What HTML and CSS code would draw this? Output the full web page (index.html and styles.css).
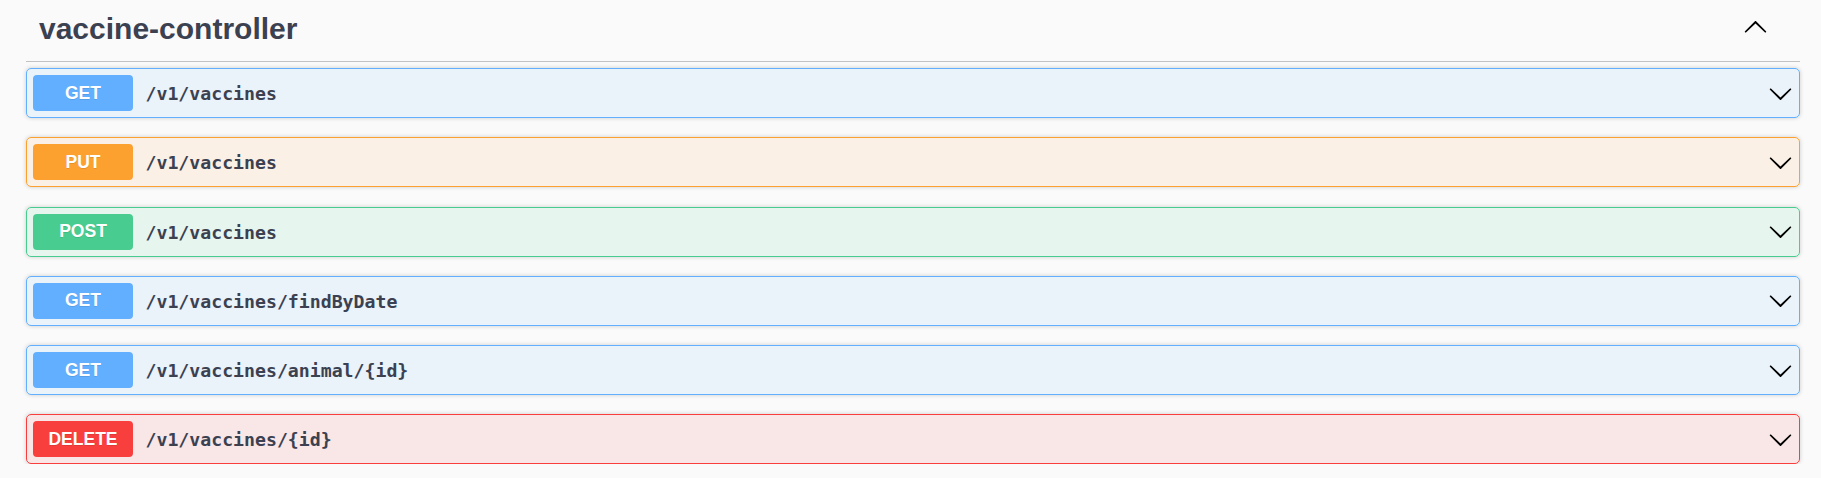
FILE: index.html
```html
<!DOCTYPE html>
<html>
<head>
<meta charset="utf-8">
<link rel="stylesheet" href="styles.css">
</head>
<body>
<div class="wrapper">
  <div class="tag">
    <h3 class="tag-title">vaccine-controller</h3>
    <button class="expand">
      <svg class="arrow up" viewBox="0 0 20 20" width="25" height="25"><path d="M17.418 6.109c.272-.268.709-.268.979 0s.271.701 0 .969l-7.908 7.83c-.27.268-.707.268-.979 0l-7.908-7.83c-.27-.268-.27-.701 0-.969.271-.268.709-.268.979 0L10 13.25l7.418-7.141z"/></svg>
    </button>
  </div>
  <div class="ops">
    <div class="op get">
      <span class="method">GET</span><span class="path">/v1/vaccines</span>
      <svg class="arrow" viewBox="0 0 20 20" width="25" height="25"><path d="M17.418 6.109c.272-.268.709-.268.979 0s.271.701 0 .969l-7.908 7.830c-.27.268-.707.268-.979 0l-7.908-7.83c-.27-.268-.27-.701 0-.969.271-.268.709-.268.979 0L10 13.25l7.418-7.141z"/></svg>
    </div>
    <div class="op put">
      <span class="method">PUT</span><span class="path">/v1/vaccines</span>
      <svg class="arrow" viewBox="0 0 20 20" width="25" height="25"><path d="M17.418 6.109c.272-.268.709-.268.979 0s.271.701 0 .969l-7.908 7.83c-.27.268-.707.268-.979 0l-7.908-7.83c-.27-.268-.27-.701 0-.969.271-.268.709-.268.979 0L10 13.25l7.418-7.141z"/></svg>
    </div>
    <div class="op post">
      <span class="method">POST</span><span class="path">/v1/vaccines</span>
      <svg class="arrow" viewBox="0 0 20 20" width="25" height="25"><path d="M17.418 6.109c.272-.268.709-.268.979 0s.271.701 0 .969l-7.908 7.83c-.27.268-.707.268-.979 0l-7.908-7.83c-.27-.268-.27-.701 0-.969.271-.268.709-.268.979 0L10 13.25l7.418-7.141z"/></svg>
    </div>
    <div class="op get">
      <span class="method">GET</span><span class="path">/v1/vaccines/findByDate</span>
      <svg class="arrow" viewBox="0 0 20 20" width="25" height="25"><path d="M17.418 6.109c.272-.268.709-.268.979 0s.271.701 0 .969l-7.908 7.83c-.27.268-.707.268-.979 0l-7.908-7.83c-.27-.268-.27-.701 0-.969.271-.268.709-.268.979 0L10 13.25l7.418-7.141z"/></svg>
    </div>
    <div class="op get">
      <span class="method">GET</span><span class="path">/v1/vaccines/animal/{id}</span>
      <svg class="arrow" viewBox="0 0 20 20" width="25" height="25"><path d="M17.418 6.109c.272-.268.709-.268.979 0s.271.701 0 .969l-7.908 7.83c-.27.268-.707.268-.979 0l-7.908-7.83c-.27-.268-.27-.701 0-.969.271-.268.709-.268.979 0L10 13.25l7.418-7.141z"/></svg>
    </div>
    <div class="op delete">
      <span class="method">DELETE</span><span class="path">/v1/vaccines/{id}</span>
      <svg class="arrow" viewBox="0 0 20 20" width="25" height="25"><path d="M17.418 6.109c.272-.268.709-.268.979 0s.271.701 0 .969l-7.908 7.83c-.27.268-.707.268-.979 0l-7.908-7.83c-.27-.268-.27-.701 0-.969.271-.268.709-.268.979 0L10 13.25l7.418-7.141z"/></svg>
    </div>
  </div>
</div>
</body>
</html>
```

FILE: styles.css
```css
html, body {
  margin: 0;
  padding: 0;
  background: #fafafa;
}
.wrapper {
  padding: 0 21px 0 26px;
  font-family: "Liberation Sans", Arial, sans-serif;
}
.tag {
  display: flex;
  align-items: flex-start;
  height: 62px;
  box-sizing: border-box;
  padding: 12px 0 0 13px;
  border-bottom: 1px solid rgba(59, 65, 81, 0.3);
  margin-bottom: 6px;
}
.tag-title {
  flex: 1;
  margin: 0;
  font-size: 30px;
  line-height: 34px;
  font-weight: 700;
  color: #3b4151;
}
.expand {
  border: none;
  background: none;
  padding: 0;
  margin: 3px 32px 0 0;
  width: 25px;
  height: 25px;
  display: block;
}
.arrow {
  display: block;
  flex: none;
  fill: #000;
}
.arrow.up {
  transform: rotate(180deg);
}
.ops {
  display: flex;
  flex-direction: column;
  gap: 19.25px;
}
.op {
  display: flex;
  align-items: center;
  height: 50px;
  box-sizing: border-box;
  padding: 6px;
  border: 1px solid;
  border-radius: 5px;
  box-shadow: 0 0 4px rgba(0, 0, 0, 0.19);
}
.method {
  min-width: 100px;
  padding: 7.5px 0;
  box-sizing: border-box;
  height: 36px;
  line-height: 21px;
  text-align: center;
  font-size: 17.5px;
  font-weight: 700;
  color: #fff;
  border-radius: 4px;
  text-shadow: 0 1px 0 rgba(0, 0, 0, 0.1);
}
.path {
  flex: 1;
  padding: 0 12.5px;
  font-family: "DejaVu Sans Mono", "Liberation Mono", monospace;
  font-size: 18.2px;
  line-height: 22px;
  font-weight: 700;
  color: #3b4151;
  position: relative;
  top: 1px;
}
.get { border-color: #61affe; background: rgba(97, 175, 254, 0.1); }
.get .method { background: #61affe; }
.put { border-color: #fca130; background: rgba(252, 161, 48, 0.1); }
.put .method { background: #fca130; }
.post { border-color: #49cc90; background: rgba(73, 204, 144, 0.1); }
.post .method { background: #49cc90; }
.delete { border-color: #f93e3e; background: rgba(249, 62, 62, 0.1); }
.delete .method { background: #f93e3e; }
```
